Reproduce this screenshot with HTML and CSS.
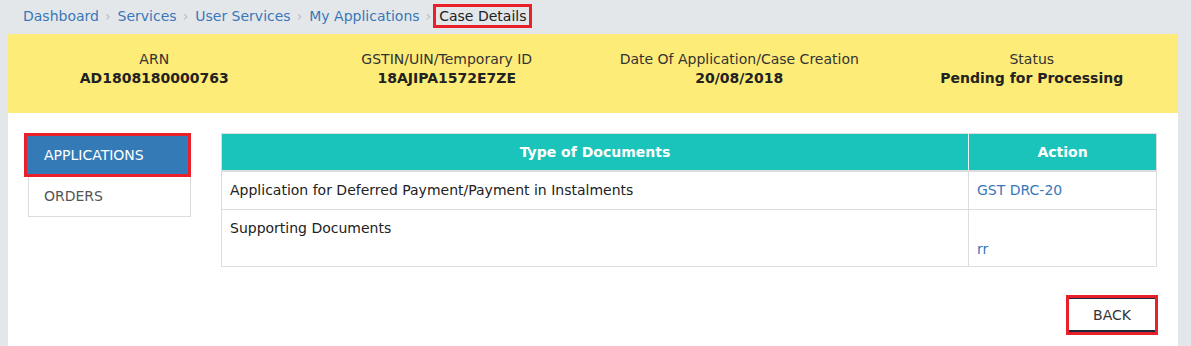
FILE: index.html
```html
<!DOCTYPE html>
<html>
<head>
<meta charset="utf-8">
<link rel="stylesheet" href="styles.css">
</head>
<body>
<nav class="crumbs">
  <a class="crumb">Dashboard</a><span class="sep">›</span>
  <a class="crumb">Services</a><span class="sep">›</span>
  <a class="crumb">User Services</a><span class="sep">›</span>
  <a class="crumb">My Applications</a><span class="sep">›</span>
  <span class="crumb current">Case Details</span>
</nav>
<div class="page">
  <div class="summary">
    <div class="cell"><div class="lbl">ARN</div><div class="val">AD1808180000763</div></div>
    <div class="cell"><div class="lbl">GSTIN/UIN/Temporary ID</div><div class="val">18AJIPA1572E7ZE</div></div>
    <div class="cell"><div class="lbl">Date Of Application/Case Creation</div><div class="val">20/08/2018</div></div>
    <div class="cell"><div class="lbl">Status</div><div class="val">Pending for Processing</div></div>
  </div>
  <div class="content">
    <div class="side">
      <div class="tab active">APPLICATIONS</div>
      <div class="tab">ORDERS</div>
    </div>
    <div class="main">
      <table class="docs">
        <thead>
          <tr><th class="c-type">Type of Documents</th><th class="c-act">Action</th></tr>
        </thead>
        <tbody>
          <tr class="r1"><td>Application for Deferred Payment/Payment in Instalments</td><td><a class="link">GST DRC-20</a></td></tr>
          <tr class="r2"><td>Supporting Documents</td><td class="rr"><a class="link">rr</a></td></tr>
        </tbody>
      </table>
      <div class="actions"><button class="back">BACK</button></div>
    </div>
  </div>
</div>
</body>
</html>
```
FILE: styles.css
```css
html, body { margin: 0; padding: 0; }
body {
  background: #e4e7ea;
  font-family: "DejaVu Sans", Verdana, sans-serif;
  font-size: 14px;
  color: #222;
  width: 1191px;
  height: 346px;
  overflow: hidden;
}
.crumbs {
  height: 32px;
  display: flex;
  align-items: center;
  padding-left: 23px;
  margin-bottom: 2px;
  box-sizing: border-box;
  font-size: 14px;
}
.crumb { color: #3a77b8; }
.sep { color: #b8bcc0; margin: 0 7px 0 6px; font-size: 14px; }
.crumb.current {
  color: #222;
  border: 3px solid #e8202a;
  padding: 1px 3px 1px 3px;
  margin-left: -5px;
}
.page {
  margin: 0 13px 0 8px;
  background: #fff;
  height: 312px;
}
.summary {
  background: #feec78;
  height: 79px;
  display: grid;
  grid-template-columns: repeat(4, 1fr);
  padding-top: 16px;
  box-sizing: border-box;
  text-align: center;
}
.lbl { color: #333; line-height: 19px; }
.val { font-weight: bold; color: #222; line-height: 19px; }
.content {
  display: flex;
  padding: 20px 21px 0 16px;
}
.side { width: 167px; flex: none; }
.tab {
  height: 39px;
  line-height: 39px;
  padding-left: 15px;
  border: 1px solid #ddd;
  border-top: none;
  margin-left: 4px;
  color: #555;
  font-size: 14px;
}
.tab.active {
  background: #337ab7;
  color: #fff;
  border: 3px solid #e8202a;
  margin-left: 0;
  height: 38px;
  line-height: 38px;
  padding-left: 17px;
}
.main { flex: 1; margin-left: 30px; }
.docs {
  width: 100%;
  border-collapse: collapse;
  border: 1px solid #ddd;
}
.docs th {
  background: #1bc4ba;
  color: #fff;
  font-weight: bold;
  height: 36px;
  padding: 0;
  border-bottom: 2px solid #ddd;
  border-left: 1px solid #e8f6f5;
}
.docs th:first-child { border-left: none; }
.c-act { width: 187px; }
.docs td {
  border: 1px solid #ddd;
  padding: 0 8px;
  vertical-align: top;
}
.r1 td { height: 37px; line-height: 37px; }
.r2 td { height: 57px; padding-top: 8px; box-sizing: border-box; line-height: 20px; }
.r2 td.rr { padding-top: 29px; }
.link { color: #3a77b8; }
.actions {
  display: flex;
  justify-content: flex-end;
  margin-top: 28px;
}
.back {
  width: 92px;
  height: 40px;
  background: #fff;
  border: 3px solid #e8202a;
  box-shadow: inset 0 1px 0 #1d2840, inset 0 -2px 0 #1d2840;
  font-family: "DejaVu Sans", Verdana, sans-serif;
  font-size: 14px;
  color: #333;
  padding: 0;
  margin-right: -1px;
}
```
